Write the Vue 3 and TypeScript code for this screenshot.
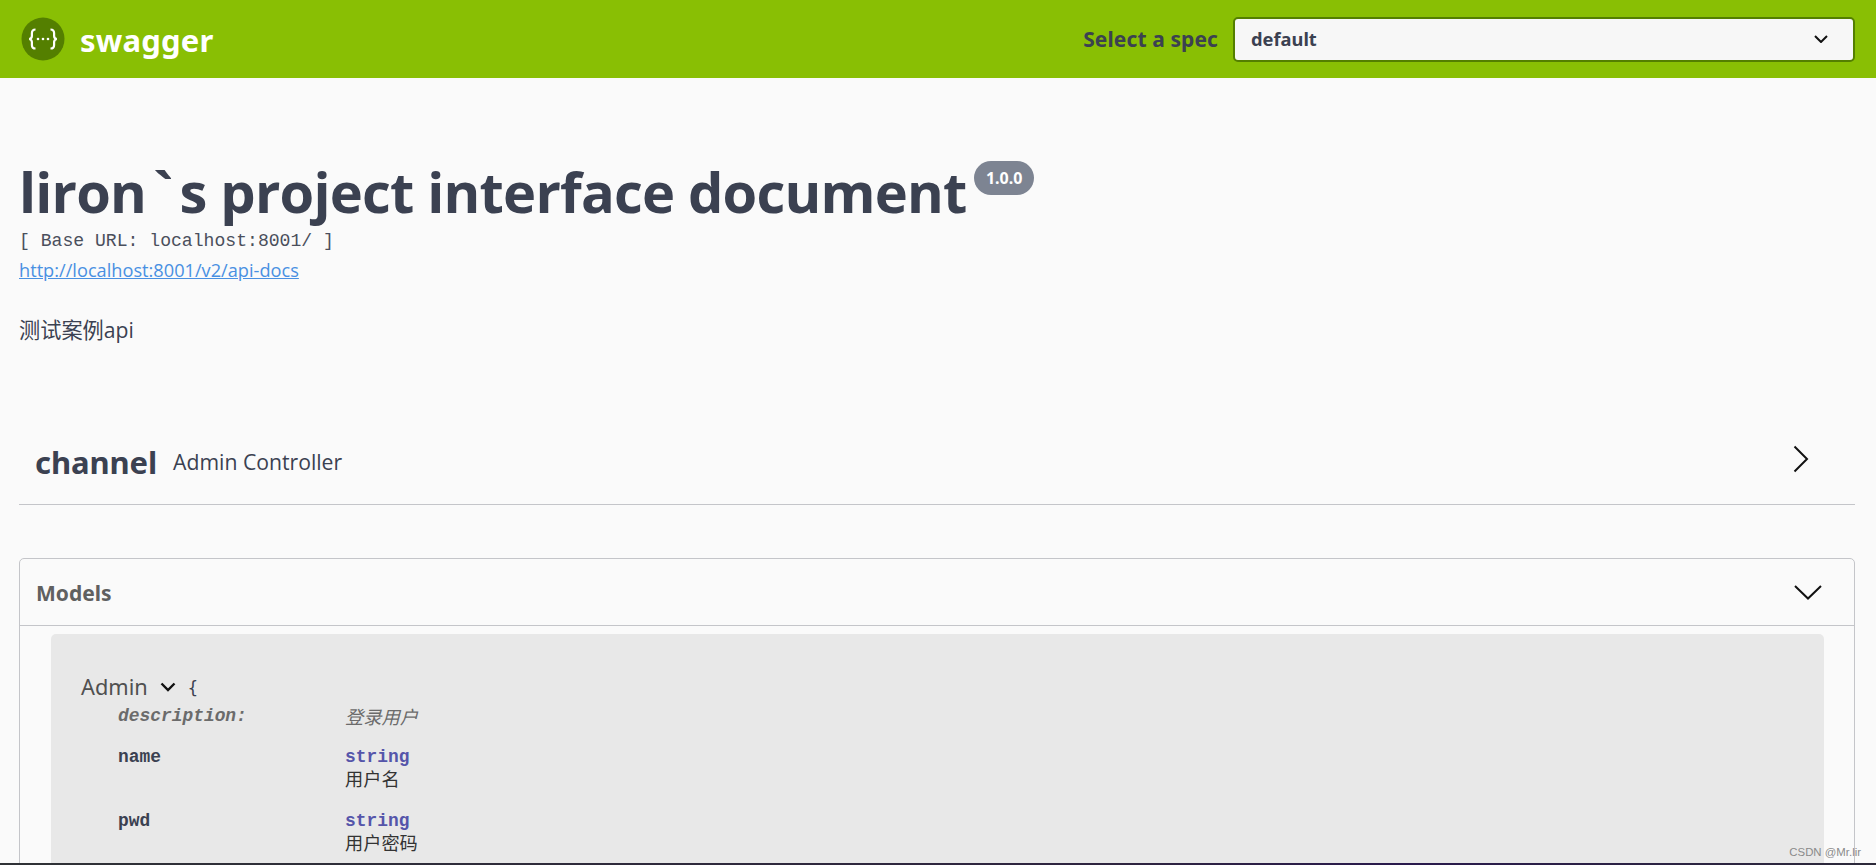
<script setup lang="ts">
interface Prop { name: string; type: string; desc: string }
const props_: Prop[] = [
  { name: 'name', type: 'string', desc: '用户名' },
  { name: 'pwd', type: 'string', desc: '用户密码' },
]
</script>

<template>
  <div class="page">
    <header class="topbar">
      <a class="brand">
        <svg class="logo" viewBox="0 0 44 44" width="44" height="44">
          <circle cx="22" cy="22" r="21.5" fill="#547f00" />
          <path d="M14.5 12.5c-3 0-3.600 1.400-3.600 3.600v2.800c0 1.800-.8 2.700-2.600 3.100 1.800.4 2.600 1.300 2.600 3.100v2.800c0 2.200.6 3.600 3.600 3.600" fill="none" stroke="#fff" stroke-width="2.200" />
          <path d="M29.5 12.5c3 0 3.600 1.400 3.600 3.600v2.800c0 1.800.8 2.700 2.600 3.100-1.800.4-2.600 1.300-2.600 3.100v2.800c0 2.200-.6 3.600-3.600 3.600" fill="none" stroke="#fff" stroke-width="2.200" />
          <circle cx="17" cy="22" r="1.300" fill="#fff" /><circle cx="22" cy="22" r="1.300" fill="#fff" /><circle cx="27" cy="22" r="1.300" fill="#fff" />
        </svg>
        <span class="brand-name">swagger</span>
      </a>
      <div class="spec">
        <span class="spec-label">Select a spec</span>
        <div class="spec-select">
          <span class="spec-value">default</span>
          <svg viewBox="0 0 14 8" width="14" height="8"><path d="M1 1l6 6 6-6" fill="none" stroke="#111" stroke-width="2" /></svg>
        </div>
      </div>
    </header>

    <main class="main">
      <section class="info">
        <h1 class="title"><span>liron<span class="tick">`</span>s project interface document</span><span class="badge">1.0.0</span></h1>
        <div class="base">[ Base URL: localhost:8001/ ]</div>
        <a class="link">http://localhost:8001/v2/api-docs</a>
        <p class="desc">测试案例api</p>
      </section>

      <section class="tag">
        <span class="tag-name">channel</span>
        <span class="tag-desc">Admin Controller</span>
        <svg class="tag-arrow" viewBox="0 0 16 28" width="16" height="28"><path d="M1.500 1.500L14 14 1.500 26.500" fill="none" stroke="#111" stroke-width="2" /></svg>
      </section>

      <section class="models">
        <div class="models-head">
          <span class="models-title">Models</span>
          <svg viewBox="0 0 28 15" width="28" height="15"><path d="M1 1l13 12.500L27 1" fill="none" stroke="#111" stroke-width="2" /></svg>
        </div>
        <div class="model">
          <div class="model-head">
            <span class="model-name">Admin</span>
            <svg class="model-toggle" viewBox="0 0 16 10" width="16" height="10"><path d="M1.500 1.500L8 8l6.500-6.500" fill="none" stroke="#111" stroke-width="2.400" /></svg>
            <span class="brace">{</span>
          </div>
          <div class="row row-desc">
            <span class="key">description:</span>
            <span class="val">登录用户</span>
          </div>
          <div v-for="p in props_" :key="p.name" class="row">
            <span class="key">{{ p.name }}</span>
            <div class="val">
              <div class="type">{{ p.type }}</div>
              <div class="cn">{{ p.desc }}</div>
            </div>
          </div>
        </div>
      </section>
    </main>
    <div class="edge"></div>
    <span class="watermark">CSDN @Mr.lir</span>
  </div>
</template>

<style scoped>
.page {
  position: relative;
  height: 865px;
  display: flex;
  flex-direction: column;
  overflow: hidden;
  background: #fafafa;
  color: #3b4151;
  font-family: "Open Sans", sans-serif;
}
.topbar {
  flex: none;
  height: 78px;
  box-sizing: border-box;
  padding: 0 21px;
  display: flex;
  align-items: center;
  justify-content: space-between;
  background: #89bf04;
}
.brand { display: flex; align-items: center; gap: 15px; }
.logo { display: block; }
.brand-name {
  font: 700 31px "Noto Sans", sans-serif;
  color: #fff;
  letter-spacing: 0.2px;
  margin-top: 1px;
}
.spec { display: flex; align-items: center; gap: 15px; }
.spec-label {
  font: 700 21px "Noto Sans", sans-serif;
  letter-spacing: 0.1px;
  color: #3b4151;
}
.spec-select {
  width: 622px;
  height: 45px;
  box-sizing: border-box;
  padding: 0 25px 0 16px;
  display: flex;
  align-items: center;
  justify-content: space-between;
  border: 2px solid #547f00;
  border-radius: 5px;
  background: #f7f7f7;
  font: 700 18.300px "Noto Sans", sans-serif;
  color: #3b4151;
}
.spec-value { margin-top: -2px; }
.main {
  flex: 1;
  min-height: 0;
  overflow: hidden;
  padding: 0 21px 0 19px;
}
.info { padding-top: 74px; }
.title {
  margin: 0;
  font: 700 56px/78px "Open Sans", sans-serif;
  letter-spacing: -0.8px;
  color: #3b4151;
  display: flex;
  align-items: flex-start;
}
.tick { margin: 0 7px; }
.badge {
  margin: 9px 0 0 8px;
  padding: 0 11.500px;
  height: 34px;
  border-radius: 17px;
  background: #7d8492;
  color: #fff;
  letter-spacing: 0;
  font: 700 16px/34px "Noto Sans", sans-serif;
}
.base {
  font: 18.100px/22px "Liberation Mono", monospace;
  color: #4a4f5c;
}
.link {
  display: block;
  margin-top: 6px;
  font-size: 18.200px;
  line-height: 24px;
  color: #4990e2;
  text-decoration: underline;
}
.desc {
  margin: 34px 0 0;
  font: 21.200px/28px "Open Sans", "Noto Sans CJK SC", sans-serif;
  color: #3b4151;
}
.tag {
  margin-top: 77px;
  height: 84px;
  box-sizing: border-box;
  padding: 0 46px 0 16px;
  display: flex;
  align-items: center;
  border-bottom: 1px solid #c4c5c9;
}
.tag-name {
  font: 700 31px "Noto Sans", sans-serif;
  letter-spacing: -0.1px;
  margin-top: -2px;
}
.tag-desc { margin-left: 16px; font-size: 21.200px; margin-top: -2px; }
.tag-arrow { margin-left: auto; margin-top: -7px; }
.models {
  margin-top: 53px;
  border: 1px solid #c4c5c9;
  border-radius: 5px;
}
.models-head {
  height: 67px;
  box-sizing: border-box;
  padding: 0 32px 0 16px;
  display: flex;
  align-items: center;
  justify-content: space-between;
  border-bottom: 1px solid #c4c5c9;
}
.models-title {
  font: 700 21px "Noto Sans", sans-serif;
  color: #606060;
  margin-top: 2px;
}
.model {
  margin: 8px 30px 0 31px;
  padding: 36px 30px 60px;
  border-radius: 5px;
  background: #e8e8e8;
}
.model-head { display: flex; align-items: center; height: 32px; margin-bottom: 3px; }
.model-name {
  font: 400 21.800px "Noto Sans", sans-serif;
  color: #505050;
}
.model-toggle { margin: 2px 0 0 12px; }
.brace { margin: 4px 0 0 12px; font: 400 17px "DejaVu Sans Mono", monospace; }
.row {
  display: grid;
  grid-template-columns: 227px 1fr;
  padding-left: 37px;
  margin-bottom: 21px;
  font: 700 17.900px/22px "Liberation Mono", "Noto Sans CJK SC", monospace;
  color: #3b4151;
}
.row-desc {
  margin-bottom: 19px;
  font-style: italic;
  color: #6b6b6b;
}
.row-desc .val { font: italic 400 18.300px/22px "Noto Sans CJK SC", sans-serif; }
.type { color: #55a; }
.cn { margin-top: -1px; font: 400 18.200px/22px "Noto Sans CJK SC", sans-serif; color: #333; }
.edge {
  flex: none;
  height: 2px;
  background: linear-gradient(90deg, #2f3236 0%, #2e2440 60%, #2a1a4d 75%, #2d2a3a 100%);
}
.watermark {
  position: absolute;
  right: 15px;
  bottom: 7px;
  font: 11.400px "Liberation Sans", sans-serif;
  color: #8a8a8a;
}
</style>

<style>
html, body { background: #fafafa; }
</style>
